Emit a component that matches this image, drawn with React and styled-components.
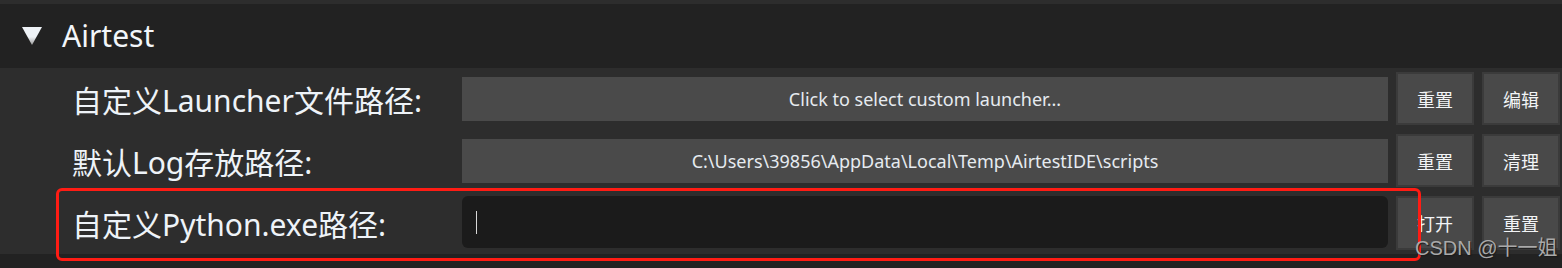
import React from 'react'
import styled, { createGlobalStyle } from 'styled-components'

const GlobalStyle = createGlobalStyle`
  html, body {
    margin: 0;
    padding: 0;
    background: #2d2d2d;
  }
  * {
    box-sizing: border-box;
  }
`

const rows = [
  { label: '自定义Launcher文件路径:', value: 'Click to select custom launcher...', buttons: ['重置', '编辑'] },
  { label: '默认Log存放路径:', value: 'C:\\Users\\39856\\AppData\\Local\\Temp\\AirtestIDE\\scripts', buttons: ['重置', '清理'] },
  { label: '自定义Python.exe路径:', value: '', editing: true, buttons: ['打开', '重置'] },
]

const App = () => {
  return (
    <Page>
      <GlobalStyle />
      <TopStrip />
      <Header>
        <svg width="20" height="19" viewBox="0 0 20 19">
          <defs>
            <linearGradient id="tri" x1="0" y1="0" x2="0" y2="1">
              <stop offset="0.55" stopColor="#eef2f6" />
              <stop offset="1" stopColor="#9a9a9a" />
            </linearGradient>
          </defs>
          <polygon points="0,1 20,1 10,19" fill="url(#tri)" />
        </svg>
        <Title>Airtest</Title>
      </Header>
      <Body>
        {rows.map((row) => (
          <React.Fragment key={row.label}>
            <Label>{row.label}</Label>
            <Field $editing={row.editing}>
              {row.editing ? <Caret /> : row.value}
            </Field>
            {row.buttons.map((b) => (
              <Button key={b}>{b}</Button>
            ))}
          </React.Fragment>
        ))}
        <Highlight />
        <Watermark>CSDN @十一姐</Watermark>
      </Body>
      <Bottom />
    </Page>
  )
}

export default App

const Page = styled.div`
  width: 1562px;
  height: 268px;
  background: #2d2d2d;
  overflow: hidden;
  font-family: "Noto Sans", "Noto Sans CJK SC", sans-serif;
  color: #eef3f8;
`

const TopStrip = styled.div`
  height: 4px;
  background: #2d2d2d;
`

const Header = styled.div`
  height: 64px;
  background: #222222;
  display: flex;
  align-items: center;
  padding-left: 22px;
  gap: 20px;

  svg{
    margin-top: -2px;
  }
`

const Title = styled.span`
  font-size: 30px;
  line-height: 1;
  color: #f2f6fa;
`

const Body = styled.div`
  position: relative;
  height: 186px;
  padding: 4px 2px 0 72px;
  display: grid;
  grid-template-columns: 382px 926px 78px 78px;
  grid-template-rows: 53px 53px 54px;
  column-gap: 8px;
  row-gap: 9px;
`

const Label = styled.div`
  display: flex;
  align-items: center;
  font-size: 30px;
  font-family: "Noto Sans", "Noto Sans CJK SC", sans-serif;
  color: #eef3f8;
  white-space: nowrap;
`

const Field = styled.div`
  align-self: center;
  height: ${p => p.$editing ? '52px' : '44px'};
  margin-top: ${p => p.$editing ? '-2px' : '0'};
  background: ${p => p.$editing ? '#1b1b1b' : '#4a4a4a'};
  border-radius: ${p => p.$editing ? '6px' : '0'};
  display: flex;
  align-items: center;
  justify-content: ${p => p.$editing ? 'flex-start' : 'center'};
  padding-left: ${p => p.$editing ? '14px' : '0'};
  font-size: 18px;
  color: #e6ebf0;
`

const Caret = styled.span`
  width: 1px;
  height: 23px;
  background: #d8d8d8;
`

const Button = styled.div`
  background: #494949;
  border: 2px solid #3b3b3b;
  display: flex;
  align-items: center;
  justify-content: center;
  font-size: 18px;
  font-family: "Noto Sans CJK SC", sans-serif;
  color: #f2f4f6;
`

const Highlight = styled.div`
  position: absolute;
  left: 56px;
  top: 120px;
  width: 1365px;
  height: 73px;
  border: 3px solid #ff1c14;
  border-radius: 6px;
  pointer-events: none;
`

const Watermark = styled.div`
  position: absolute;
  left: 1415px;
  top: 164px;
  font-size: 20px;
  font-family: "Liberation Sans", "Noto Sans CJK SC", sans-serif;
  color: #a9a9a9;
  text-shadow: 1px 1px 1px #1a1a1a;
  white-space: nowrap;
`

const Bottom = styled.div`
  height: 14px;
  background: #222222;
`
